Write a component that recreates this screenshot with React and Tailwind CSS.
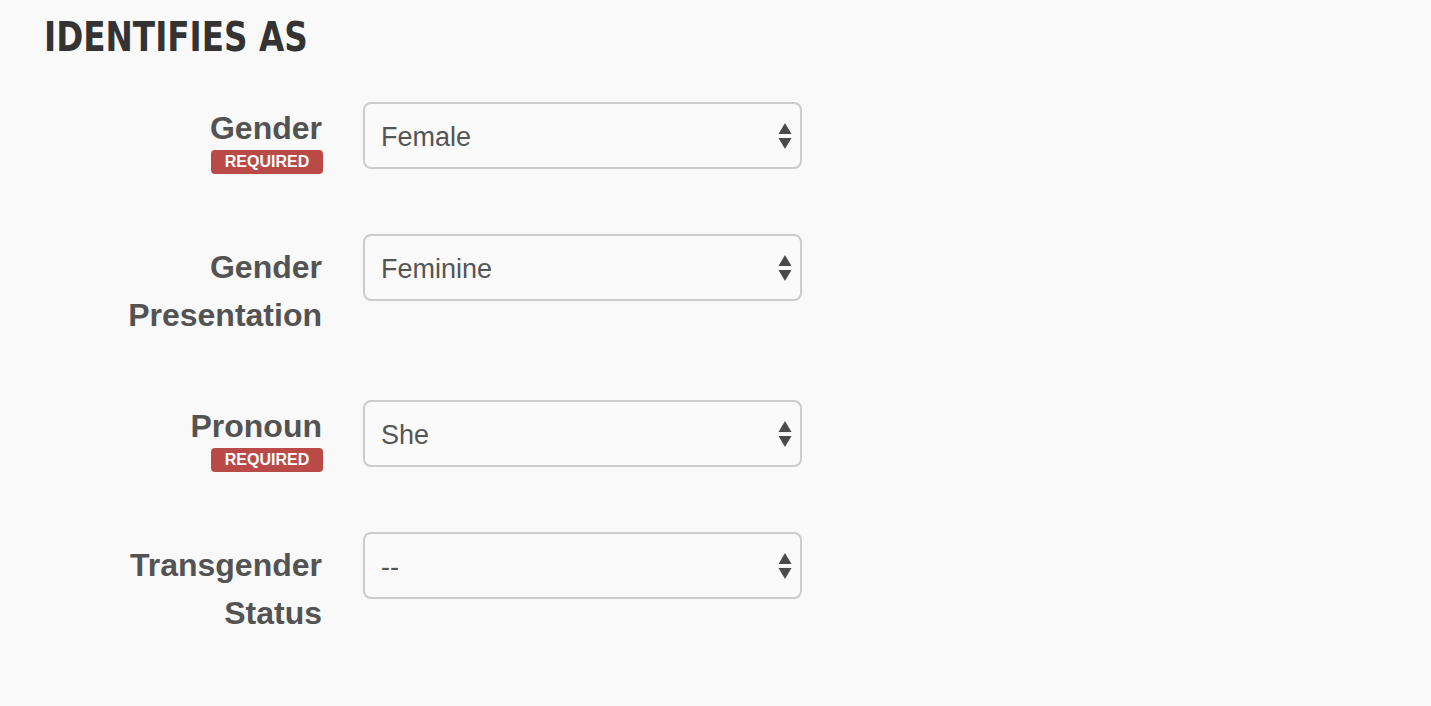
import React from 'react';

const Arrows = () => (
  <svg width="14" height="26" viewBox="0 0 14 26" className="shrink-0 text-[#4a4a4a]">
    <path d="M7 0L13.5 11H0.5Z" fill="currentColor" />
    <path d="M0.5 15H13.5L7 26Z" fill="currentColor" />
  </svg>
);

const Badge = () => (
  <span className="mt-[-2px] inline-flex h-[24px] w-[112px] items-center justify-center rounded-[4px] bg-[#b94a48] text-[16px] font-bold leading-none text-white">
    REQUIRED
  </span>
);

const SelectBox = ({ value }) => (
  <div className="flex h-[67px] w-[439px] shrink-0 items-center justify-between rounded-[8px] border-2 border-[#cccccc] bg-[#fafafa] pl-[16px] pr-[8px]">
    <span className="pt-[4px] text-[27px] text-[#555555]">{value}</span>
    <Arrows />
  </div>
);

const fields = [
  { label: ['Gender'], value: 'Female', required: true, height: 'h-[132px]' },
  { label: ['Gender', 'Presentation'], value: 'Feminine', required: false, height: 'h-[166px]' },
  { label: ['Pronoun'], value: 'She', required: true, height: 'h-[132px]' },
  { label: ['Transgender', 'Status'], value: '--', required: false, height: 'h-[172px]' },
];

export default function App() {
  return (
    <div className="min-h-[706px] w-full bg-[#f9f9f9] font-['Liberation_Sans',Arial,sans-serif]">
      <div className="pl-[44px] pt-[17px]">
        <h1 className="inline-block origin-left scale-x-[0.885] font-['DejaVu_Sans_Condensed','DejaVu_Sans',sans-serif] text-[41px] font-bold leading-none text-[#333333]">
          IDENTIFIES AS
        </h1>
      </div>

      <div className="mt-[44px] flex flex-col">
        {fields.map((f) => (
          <div key={f.value} className={`flex gap-[40px] ${f.height}`}>
            <div
              className={`flex w-[323px] shrink-0 flex-col items-end text-right text-[32px] font-bold leading-[48px] text-[#535353] ${
                f.required ? 'pt-[2px]' : 'pt-[9px]'
              }`}
            >
              {f.label.map((l) => (
                <span key={l} className="pr-px">{l}</span>
              ))}
              {f.required && <Badge />}
            </div>
            <SelectBox value={f.value} />
          </div>
        ))}
      </div>
    </div>
  );
}
